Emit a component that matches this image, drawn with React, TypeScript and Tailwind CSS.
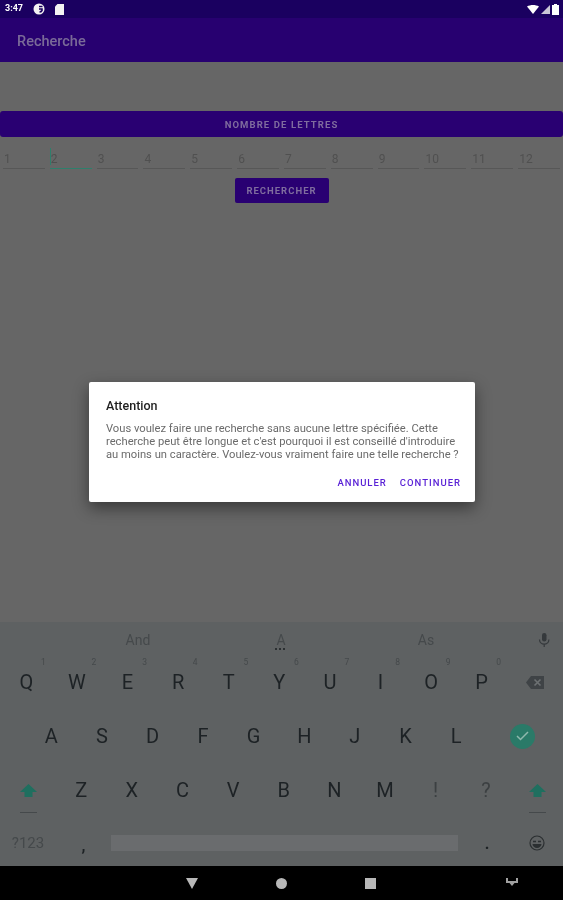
const NUMS = ["1","2","3","4","5","6","7","8","9","10","11","12"];
const ROW1 = [["Q","1"],["W","2"],["E","3"],["R","4"],["T","5"],["Y","6"],["U","7"],["I","8"],["O","9"],["P","0"]];
const ROW2 = ["A","S","D","F","G","H","J","K","L"];
const ROW3 = ["Z","X","C","V","B","N","M","!","?"];

function Shift() {
  return (
    <div className="flex flex-col items-center">
      <svg width="17" height="13" viewBox="0 0 17 13">
        <path d="M8.5 0 L17 8 H12.5 V13 H4.5 V8 H0 Z" fill="#1f6f5f" />
      </svg>
      <div className="mt-[15px] h-[1.5px] w-[17px] bg-[#45494b]" />
    </div>
  );
}

export default function App() {
  return (
    <div className="relative flex h-[900px] w-[563px] flex-col overflow-hidden bg-[#666666] blur-[0.6px] font-['Roboto',sans-serif]">
      {/* status bar */}
      <div className="flex h-[18px] items-center justify-between bg-[#1a0060] pl-[5px] pr-[4px]">
        <div className="flex items-center gap-[10px]">
          <span className="text-[9px] font-bold text-white">3:47</span>
          <svg width="12" height="12" viewBox="0 0 12 12"><circle cx="6" cy="6" r="5.5" fill="#f3f3f3" /><path d="M6 3.5h3.5M6 6h3v1.5a3 3 0 0 1-2.5 1.5" stroke="#1a0060" strokeWidth="1.6" fill="none" /></svg>
          <svg width="9" height="11" viewBox="0 0 9 11"><path d="M2.5 0H9V11H0V2.5Z" fill="#f3f3f3" /></svg>
        </div>
        <div className="flex items-center gap-[2px]">
          <svg width="12" height="9" viewBox="0 0 12 9"><path d="M0 1.5C3.5-.5 8.5-.5 12 1.5L6 9Z" fill="#fff" /></svg>
          <svg width="9" height="9" viewBox="0 0 9 9"><path d="M9 0V9H0Z" fill="#c9c6d6" /></svg>
          <svg width="7" height="11" viewBox="0 0 7 11"><path d="M2 0H5V1H7V11H0V1H2Z" fill="#fff" /></svg>
        </div>
      </div>
      {/* app bar */}
      <div className="flex h-[44px] items-center bg-[#270070] pl-[17px] pt-[3px] text-[14.5px] font-medium text-[#7a6a98]">Recherche</div>

      {/* content */}
      <div className="flex flex-1 flex-col items-stretch bg-[#666666]">
        <div className="mt-[49px] flex h-[26px] items-center justify-center rounded-[3px] bg-[#290072] pt-[2px] text-[9.5px] font-bold tracking-[1.1px] text-[#7f6c9e]">NOMBRE DE LETTRES</div>
        <div className="grid grid-cols-12 gap-[5px] px-[3px] pt-[13px]">
          {NUMS.map((n, i) => (
            <div key={n} className={`relative h-[19px] border-b-[1.5px] pt-[1px] text-[12px] leading-[16px] text-[#505050] ${i === 1 ? "border-[#2f7f6c]" : "border-[#575757]"}`}>
              {i === 1 && <span className="absolute left-0 top-[-2px] h-[17px] w-[1px] bg-[#2f7f6c]" />}
              <span className="pl-[1px]">{n}</span>
            </div>
          ))}
        </div>
        <div className="mt-[9px] flex justify-center">
          <div className="flex h-[25px] w-[94px] items-center justify-center rounded-[2px] bg-[#290072] pt-[1px] text-[9.5px] font-bold tracking-[1px] text-[#7f6c9e]">RECHERCHER</div>
        </div>
      </div>

      {/* keyboard */}
      <div className="flex h-[244px] flex-col bg-[#5e6162] text-[#1d2225]">
        <div className="flex h-[30px] items-center pt-[6px] text-[14px] text-[#45494b]">
          <div className="w-[276px] text-center">And</div>
          <div className="relative ml-[-1px] w-[12px] text-center">
            A
            <span className="absolute left-[0px] top-[18px] flex gap-[2px]">
              <span className="h-[2px] w-[2px] bg-[#2b2f31]" />
              <span className="h-[2px] w-[2px] bg-[#2b2f31]" />
              <span className="h-[2px] w-[2px] bg-[#2b2f31]" />
            </span>
          </div>
          <div className="ml-[3px] w-[272px] text-center">As</div>
          <svg width="12" height="14" viewBox="0 0 12 14" className="absolute right-[13px]"><rect x="4" y="0" width="4.5" height="8.5" rx="2.2" fill="#35393c" /><path d="M1.5 6.5a4.7 4.7 0 0 0 9.4 0M6.2 11v3" stroke="#35393c" strokeWidth="1.2" fill="none" /></svg>
        </div>
        <div className="flex h-[54px] items-center pl-[1px]">
          {ROW1.map(([k, s]) => (
            <div key={k} className="relative w-[50.6px] pt-[6px] text-center text-[20px] leading-[24px]">
              {k}
              <span className="absolute left-[40px] top-[-7px] text-[8.5px] leading-[10px] text-[#45494b]">{s}</span>
            </div>
          ))}
          <div className="flex flex-1 justify-center pt-[6px]">
            <svg width="18" height="13" viewBox="0 0 18 13"><path d="M5 0H18V13H5L0 6.5Z" fill="#3f4346" /><path d="M8.5 3.5l6 6M14.5 3.5l-6 6" stroke="#6d7173" strokeWidth="1.6" /></svg>
          </div>
        </div>
        <div className="flex h-[54px] items-center pl-[26px] pt-[6px]">
          {ROW2.map(k => (
            <div key={k} className="w-[50.6px] text-center text-[20px] leading-[24px]">{k}</div>
          ))}
          <div className="flex flex-1 justify-center">
            <div className="flex h-[25px] w-[25px] items-center justify-center rounded-full bg-[#2a7a68]">
              <svg width="13" height="10" viewBox="0 0 13 10"><path d="M1 5l3.5 3.5L12 1" stroke="#8fb8ad" strokeWidth="1.5" fill="none" /></svg>
            </div>
          </div>
        </div>
        <div className="flex h-[54px] items-center pt-[6px]">
          <div className="flex w-[56px] justify-center pt-[17px]"><Shift /></div>
          {ROW3.map(k => (
            <div key={k} className={`w-[50.6px] text-center text-[20px] leading-[24px] ${k === "!" || k === "?" ? "text-[#3c4042]" : ""}`}>{k}</div>
          ))}
          <div className="flex flex-1 justify-center pt-[17px]"><Shift /></div>
        </div>
        <div className="flex h-[52px] items-center pt-[6px]">
          <div className="w-[56px] text-center text-[15px] text-[#45494b]">?123</div>
          <div className="w-[55px] pt-[6px] text-center text-[16px] font-bold leading-[16px]">,</div>
          <div className="h-[16px] w-[347px] bg-[#6a6c6e]" />
          <div className="w-[58px] pt-[2px] text-center text-[16px] font-bold leading-[16px]">.</div>
          <div className="flex flex-1 justify-center pr-[5px]">
            <svg width="16" height="16" viewBox="0 0 16 16"><circle cx="8" cy="8" r="7" stroke="#2b2f31" strokeWidth="1.2" fill="none" /><path d="M4 6.5h3M9 6.5h3" stroke="#2b2f31" strokeWidth="1.3" /><path d="M3.5 9h9a4.5 4 0 0 1-9 0Z" fill="#2b2f31" /></svg>
          </div>
        </div>
      </div>

      {/* nav bar */}
      <div className="relative flex h-[34px] items-center bg-black">
        <div className="flex w-[563px] items-center">
          <svg width="12" height="11" viewBox="0 0 12 11" className="ml-[186px]"><path d="M0 0H12L6 11Z" fill="#b8b8b8" /></svg>
          <span className="ml-[78px] h-[11px] w-[11px] rounded-full bg-[#b8b8b8]" />
          <span className="ml-[78px] h-[11px] w-[11px] bg-[#b8b8b8]" />
          <svg width="12" height="9" viewBox="0 0 12 9" className="ml-[130px] -mt-[2px]"><path d="M0 0H2V3H10V0H12V5H8.5L6 8 3.5 5H0Z" fill="#a0a0a0" /></svg>
        </div>
      </div>

      {/* dialog */}
      <div className="absolute left-[89px] top-[382px] h-[120px] w-[386px] rounded-[2px] bg-white pl-[17px] pr-[14px] shadow-[0_6px_16px_rgba(0,0,0,0.45)]">
        <div className="pt-[16px] text-[12.5px] font-medium leading-[16px] text-[#1f1f1f]">Attention</div>
        <div className="mt-[8px] text-[11.2px] leading-[13px] text-[#6b6b6b]">
          Vous voulez faire une recherche sans aucune lettre spécifiée. Cette recherche peut être longue et c'est pourquoi il est conseillé d'introduire au moins un caractère. Voulez-vous vraiment faire une telle recherche ?
        </div>
        <div className="mt-[15px] flex justify-end gap-[13px] text-[9.5px] font-medium tracking-[1px] text-[#5a22d6]">
          <span>ANNULER</span>
          <span>CONTINUER</span>
        </div>
      </div>
    </div>
  );
}
